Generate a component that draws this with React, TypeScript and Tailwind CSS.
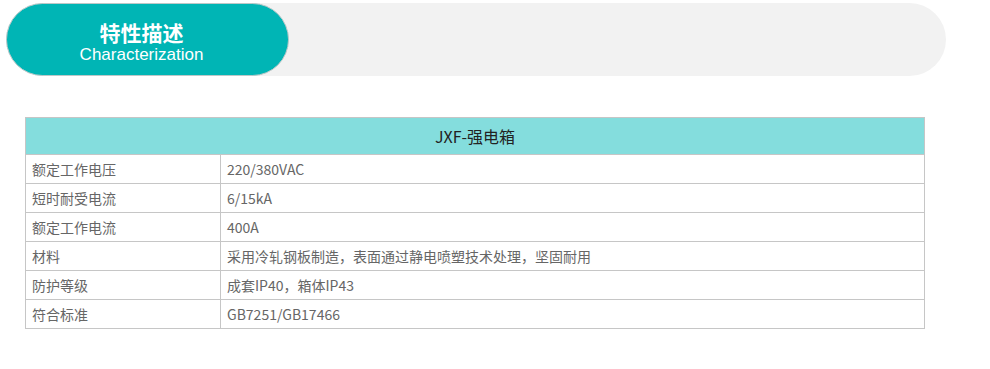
import React from "react";

const rows: [string, string][] = [
  ["额定工作电压", "220/380VAC"],
  ["短时耐受电流", "6/15kA"],
  ["额定工作电流", "400A"],
  ["材料", "采用冷轧钢板制造，表面通过静电喷塑技术处理，坚固耐用"],
  ["防护等级", "成套IP40，箱体IP43"],
  ["符合标准", "GB7251/GB17466"],
];

export default function App() {
  return (
    <div className="w-[990px] h-[369px] bg-white overflow-hidden">
      <div className="pt-[3px] pl-[6px]">
        <div className="flex w-[940px] h-[73px] rounded-full bg-[#f2f2f2]">
          <div className="w-[283px] h-[73px] rounded-full bg-[#00b5b5] border border-[#bcc8c8] flex flex-col items-center pt-[17px] pr-[12px]">
            <div
              className="text-white text-[21px] font-bold leading-[25px]"
              style={{ fontFamily: '"Liberation Sans", "Noto Sans CJK SC", sans-serif' }}
            >
              特性描述
            </div>
            <div
              className="text-white text-[17px] leading-[18px]"
              style={{ fontFamily: '"Liberation Sans", Arial, sans-serif' }}
            >
              Characterization
            </div>
          </div>
        </div>
      </div>
      <div
        className="ml-[25px] mt-[41px] w-[900px] border border-[#c6c6c6]"
        style={{ fontFamily: '"Noto Sans CJK SC", sans-serif' }}
      >
        <div className="h-[36px] bg-[#84dddd] flex items-center justify-center text-[16px] text-[#222]">
          JXF-强电箱
        </div>
        {rows.map(([k, v]) => (
          <div key={k} className="flex h-[29px] border-t border-[#c6c6c6] text-[14px] text-[#666]">
            <div className="w-[195px] border-r border-[#c6c6c6] flex items-center pl-[6px]">{k}</div>
            <div className="flex-1 flex items-center pl-[6px]">{v}</div>
          </div>
        ))}
      </div>
    </div>
  );
}
